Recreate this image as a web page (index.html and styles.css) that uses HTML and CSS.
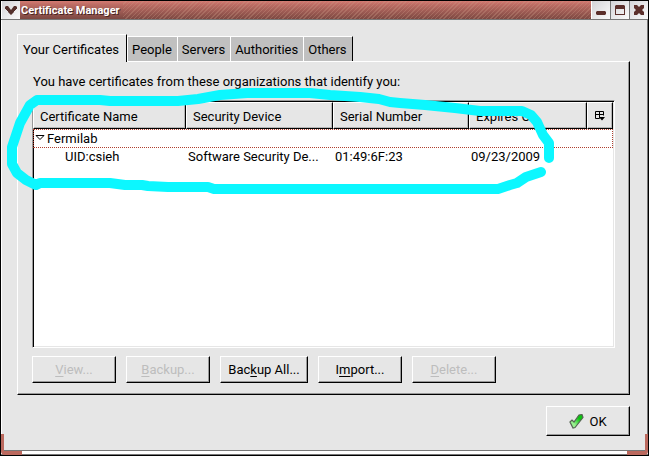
FILE: index.html
```
<!DOCTYPE html>
<html lang="en">
<head>
<meta charset="utf-8">
<title>Certificate Manager</title>
<link rel="stylesheet" href="styles.css">
</head>
<body>
<div class="window">
  <header class="titlebar">
    <button class="win-btn" type="button" aria-label="Window menu"><svg width="18" height="18" viewBox="0 0 18 18"><path d="M4 5h2l3 4 3-4h2l1 1v2h-1v1h-1v1h-1v1l-3 3-3-3v-1H5V9H4V8H3V6z" fill="#54302c"/></svg></button>
    <h1>Certificate Manager</h1>
    <div class="title-fill"></div>
    <button class="win-btn" type="button" aria-label="Minimize"><svg width="18" height="18" viewBox="0 0 18 18"><path d="M5 10h8l1 1v2l-1 1H5l-1-1v-2z" fill="#5b2f2b"/></svg></button>
    <button class="win-btn" type="button" aria-label="Maximize"><svg width="18" height="18" viewBox="0 0 18 18"><path d="M5 4h8l1 1v9H4V5zM5 8v5h8V8z" fill="#5b2f2b" fill-rule="evenodd"/></svg></button>
    <button class="win-btn" type="button" aria-label="Close"><svg width="18" height="18" viewBox="0 0 18 18"><path d="M4 4h3l2 2 2-2h3v3l-2 2 2 2v3h-3l-2-2-2 2H4v-3l2-2-2-2z" fill="#5b2f2b"/></svg></button>
  </header>

  <main class="content">
    <div class="tabs" role="tablist">
      <button class="tab selected" type="button" role="tab" aria-selected="true">Your Certificates</button>
      <button class="tab" type="button" role="tab">People</button>
      <button class="tab" type="button" role="tab">Servers</button>
      <button class="tab" type="button" role="tab">Authorities</button>
      <button class="tab last" type="button" role="tab">Others</button>
    </div>
    <section class="panel" role="tabpanel">
      <p>You have certificates from these organizations that identify you:</p>
      <div class="tree">
        <table>
          <colgroup><col class="c-name"><col class="c-device"><col class="c-serial"><col><col class="c-picker"></colgroup>
          <thead>
            <tr>
              <th>Certificate Name</th><th>Security Device</th><th>Serial Number</th><th>Expires On</th>
              <th class="picker"><button type="button" aria-label="Choose columns"><svg width="12" height="11" viewBox="0 0 12 11"><path d="M1.500 .5h8v4M1.500 .5v7h4M1 3.500h9M5.500 .5v7" fill="none" stroke="#000"/><path d="M5 6h6L8 9.500z"/></svg></button></th>
            </tr>
          </thead>
          <tbody>
            <tr class="group"><td colspan="5"><svg class="twisty" width="10" height="7" viewBox="0 0 10 7"><path d="M1 1.500h8L5 5.500z" fill="#fff" stroke="#000"/></svg>Fermilab</td></tr>
            <tr class="leaf"><td>UID:csieh</td><td>Software Security De...</td><td>01:49:6F:23</td><td>09/23/2009</td><td></td></tr>
          </tbody>
        </table>
      </div>
      <div class="actions">
        <button class="btn" type="button" disabled><span><u>V</u>iew...</span></button>
        <button class="btn" type="button" disabled><span><u>B</u>ackup...</span></button>
        <button class="btn wide" type="button"><span>Bac<u>k</u>up All...</span></button>
        <button class="btn" type="button"><span>I<u>m</u>port...</span></button>
        <button class="btn" type="button" disabled><span><u>D</u>elete...</span></button>
      </div>
    </section>
    <div class="footer">
      <button class="btn ok" type="button"><svg width="15" height="15" viewBox="0 0 15 15"><defs><linearGradient id="g" x1="1" y1="0" x2="0" y2="1"><stop offset=".3" stop-color="#0bc510"/><stop offset=".7" stop-color="#99f090"/></linearGradient></defs><path d="M1 8l2-2 2 2 5-7 3-.5 1 3-8 10-2 .5z" fill="url(#g)" stroke="#566553" stroke-width="1.200"/></svg>OK</button>
    </div>
  </main>
  <div class="bottom-edge"><i class="corner left"></i><i class="corner right"></i></div>
</div>
<svg class="marker" width="649" height="456" viewBox="0 0 649 456" aria-hidden="true"><path d="M549 158V143L543 135 537 122 531 115 522 111H480L455 108 425 105 400 103 390 102 379 99 360 97 330 95 310 93H247L220 95 198 99 178 101H110L100 100H37L30 105 20 123 12 147V164L17 173 26 180 36 185 40 183H110L125 185H142L148 186 168 187H208L214 189H498L510 185 517 183 526 177 541 172"/></svg>
</body>
</html>
```
FILE: styles.css
```
* { box-sizing: border-box; }

body {
  margin: 0;
  background: #e6e6e6;
  color: #000;
  font: 13px/18px Roboto, "Noto Sans", sans-serif;
}

button { font: inherit; color: inherit; padding: 0; margin: 0; border-radius: 0; }

.window {
  min-height: 100vh;
  display: flex;
  flex-direction: column;
  border: 1px solid #000;
  box-shadow: inset 1px 0 #fff, inset -1px 0 #777;
}

/* Title bar */
.titlebar {
  display: flex;
  height: 19px;
  border-bottom: 1px solid #777;
  background: linear-gradient(#d47a72, #bd6c64 20%, #7c4842);
}
.titlebar h1 {
  margin: 0;
  padding: 0 3px 0 1px;
  color: #fff;
  font-size: 11px;
  line-height: 20px;
  text-shadow: 1px 1px #4a2521;
}
.title-fill {
  flex: 1;
  background: repeating-linear-gradient(135deg, transparent 0 2px, #c9988355 2px 3px);
}
.win-btn {
  width: 19px;
  border: 0;
  border-left: 1px solid #fff;
  background: linear-gradient(135deg, #d4d4d8, #fafafa);
}
.win-btn + .win-btn { border-left: 1px solid #777; }
.win-btn svg { display: block; }

/* Content */
.content {
  flex: 1;
  display: flex;
  flex-direction: column;
  padding: 14px 18px 14px 16px;
}

.tabs { display: flex; align-items: flex-end; height: 27px; }
.tab {
  height: 25px;
  padding: 2px 5px 0 4px;
  border: 0;
  border-top: 1px solid #fff;
  border-left: 1px solid #fff;
  background: #c0c0c0;
}
.tab.selected {
  height: 28px;
  margin-bottom: -1px;
  padding: 2px 7px 0 5px;
  border-right: 1px solid #000;
  background: #e6e6e6;
  position: relative;
}
.tab.last { border-right: 1px solid #000; }

.panel {
  flex: 1;
  display: flex;
  flex-direction: column;
  padding: 11px 14px 11px;
  border: 1px solid;
  border-color: #fff #000 #000 #fff;
  box-shadow: inset -1px -1px #999;
}
.panel p { margin: 0 0 9px; padding-left: 1px; }

/* Certificate list */
.tree {
  flex: 1;
  border: 1px solid;
  border-color: #999 #fff #fff #999;
  background: #fff;
  box-shadow: inset 1px 1px #000, inset -1px -1px #e6e6e6;
  padding: 1px 1px 1px 0;
}
table { width: 100%; table-layout: fixed; border-collapse: separate; border-spacing: 0; }
.c-name { width: 153px; }
.c-device { width: 147px; }
.c-serial { width: 136px; }
.c-picker { width: 26px; }
th {
  height: 27px;
  padding: 2px 6px 0;
  border: 1px solid;
  border-color: #fff #000 #000 #fff;
  background: #e6e6e6;
  box-shadow: inset -1px -1px #b5b5b5;
  font-weight: normal;
  text-align: left;
}
.picker { padding: 2px 0 0; }
.picker button { display: grid; place-items: center; width: 100%; border: 0; background: none; }
td {
  height: 18px;
  padding: 0 2px;
  white-space: nowrap;
  line-height: 18px;
}
.group td { height: 19px; border: 1px dotted #b0402f; padding: 1px 2px 0 1px; line-height: 16px; }
.twisty { margin-right: 2px; vertical-align: 2px; }
.leaf td:first-child { padding-left: 32px; }

/* Buttons */
.actions { display: flex; gap: 10px; margin-top: 8px; }
.btn {
  width: 84px;
  height: 27px;
  padding-top: 1px;
  border: 1px solid;
  border-color: #fff #000 #000 #fff;
  background: #e6e6e6;
  box-shadow: inset -1px -1px #999;
}
.btn.wide { width: 88px; }
.btn u { text-underline-offset: 2px; }
.btn:disabled { color: #bdbdbd; }
.footer { display: flex; justify-content: flex-end; margin-top: 11px; }
.btn.ok { display: flex; align-items: center; justify-content: center; gap: 5px; height: 30px; }

/* Window frame */
.bottom-edge {
  display: flex;
  justify-content: space-between;
  height: 5px;
  border-top: 1px solid #777;
  border-bottom: 1px solid #777;
  background: #fff;
}
.corner { width: 21px; height: 21px; margin-top: -17px; border: 4px solid #bb695e; border-top: 0; }
.corner.left { border-right: 0; border-radius: 0 0 0 4px; border-left-width: 3px; }
.corner.right { border-left: 0; border-radius: 0 0 4px 0; border-right-width: 3px; }

/* Hand-drawn highlight over the list */
.marker { position: absolute; top: 0; left: 0; pointer-events: none; }
.marker path { fill: none; stroke: #0cf7ff; stroke-width: 10px; stroke-linecap: round; stroke-linejoin: round; }
```
